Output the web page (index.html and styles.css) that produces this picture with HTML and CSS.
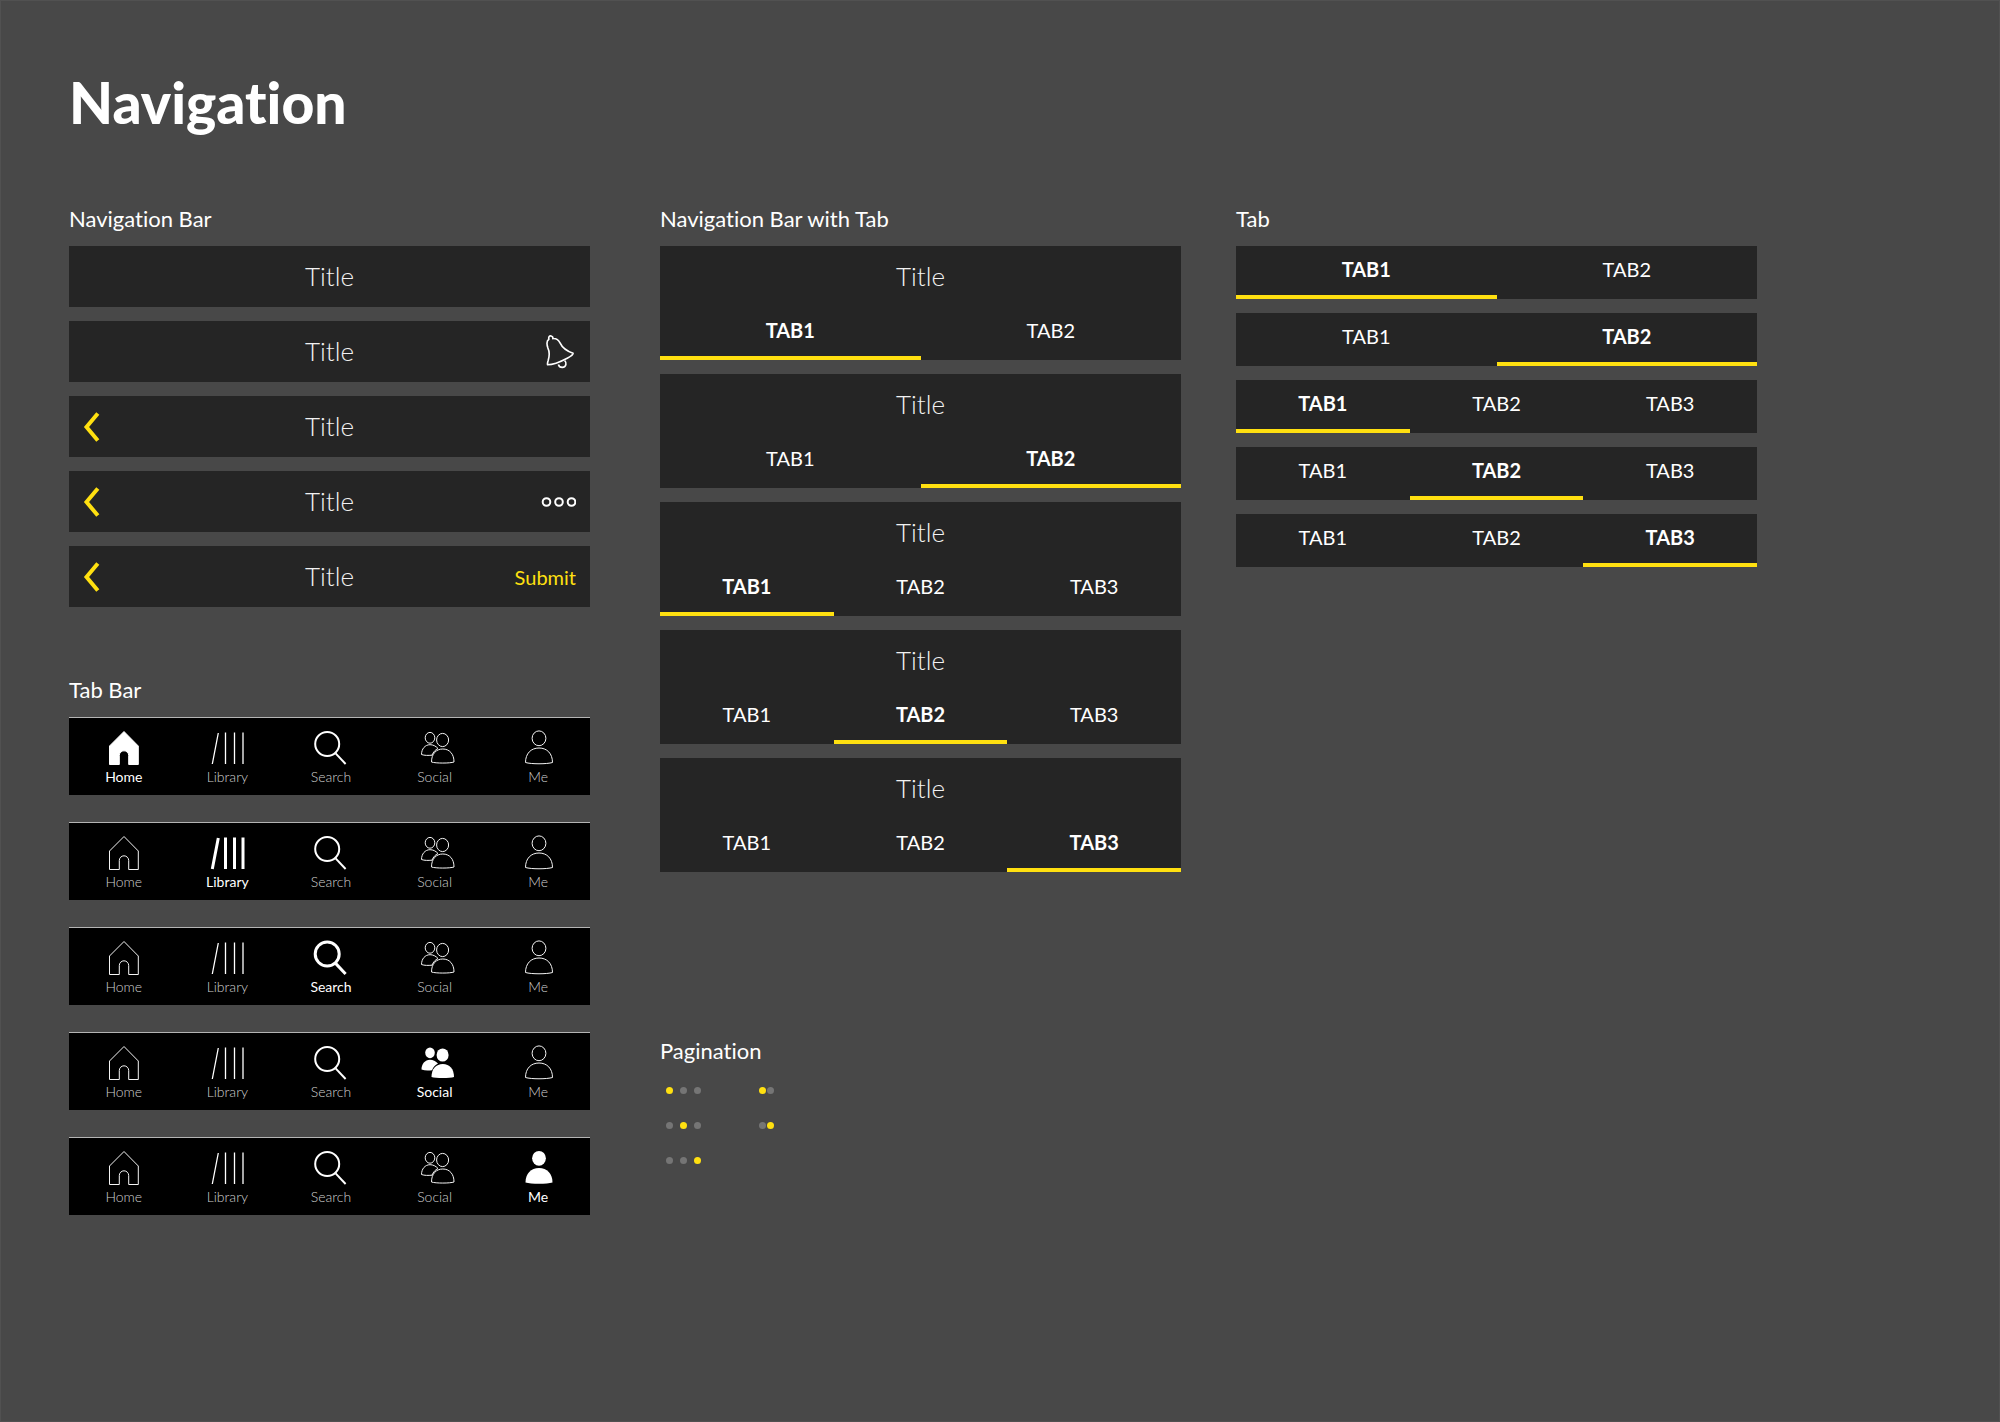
FILE: index.html
```html
<!DOCTYPE html>
<html lang="en">
<head>
<meta charset="utf-8">
<title>Navigation</title>
<link rel="stylesheet" href="styles.css">
</head>
<body>
<svg class="sprite" aria-hidden="true">
  <symbol id="home" viewBox="0 0 40 40"><path d="M20 4.5 34.3 19V37.5H24.7V28.5a4.7 4.7 0 0 0-9.4 0V37.5H5.5V19Z"/></symbol>
  <symbol id="library" viewBox="0 0 40 40"><path d="M11.3 6 5.3 37M18.5 5.5V37M27.5 5.5V37M36 5.5V37"/></symbol>
  <symbol id="search" viewBox="0 0 40 40"><circle cx="16.2" cy="17" r="12"/><path d="M24.6 26.4 34.6 37"/></symbol>
  <symbol id="social" viewBox="0 0 40 40"><ellipse cx="15" cy="10.8" rx="4.8" ry="5.4"/><ellipse cx="27.6" cy="13" rx="6" ry="6.6"/><path d="M23 21.5C20.8 19 18 17.7 15 17.7 10 17.7 6.5 22 6.5 27.5 9.5 28.6 13 28.5 17 28.2 18.2 25.2 20.2 22.8 23 21.5Z"/><path d="M16.5 35C16.5 27 21 22 27.8 22S39 27 39 35C35 36.4 20.5 36.4 16.5 35Z"/></symbol>
  <symbol id="me" viewBox="0 0 40 40"><ellipse cx="21" cy="11.3" rx="6.9" ry="7.4"/><path d="M7.5 35.5C7.5 26.5 13 21 21 21S34.5 26.5 34.5 35.5C29 37.2 13 37.2 7.5 35.5Z"/></symbol>
  <symbol id="back" viewBox="0 0 16 30"><path d="M13.8 1.5 2.5 15 13.8 28.5"/></symbol>
  <symbol id="bell" viewBox="78 40 90 110"><path d="M86 56C84 48 88 45 93 46 97 47 99 50 98 54 108 53 115 57 120 67 126 80 138 91 160 99 160 104 150 110 142 114 125 123 105 134 82 134 81 130 82 126 84 120 88 106 88 93 83 83 79 71 78 61 86 56Z"/><path d="M115 133C118 145 136 145 138 133 139 129 138 125 134 121"/></symbol>
  <symbol id="more" viewBox="0 0 36 12"><circle cx="6.5" cy="6" r="3.8"/><circle cx="19" cy="6" r="3.8"/><circle cx="31.5" cy="6" r="3.8"/></symbol>
</svg>
<main class="page">
  <h1>Navigation</h1>
  <div class="columns">
    <div class="column">
      <section>
        <h2>Navigation Bar</h2>
        <div class="stack">
          <header class="navbar"><span class="title">Title</span></header>
          <header class="navbar"><span class="title">Title</span><button class="action" aria-label="Notifications"><svg class="bell"><use href="#bell"/></svg></button></header>
          <header class="navbar"><button class="back" aria-label="Back"><svg><use href="#back"/></svg></button><span class="title">Title</span></header>
          <header class="navbar"><button class="back" aria-label="Back"><svg><use href="#back"/></svg></button><span class="title">Title</span><button class="action" aria-label="More"><svg class="more"><use href="#more"/></svg></button></header>
          <header class="navbar"><button class="back" aria-label="Back"><svg><use href="#back"/></svg></button><span class="title">Title</span><button class="action">Submit</button></header>
        </div>
      </section>
      <section class="tabbar-section">
        <h2>Tab Bar</h2>
        <div class="stack stack-wide">
          <nav class="tabbar">
            <a href="#" class="item solid active"><svg><use href="#home"/></svg>Home</a>
            <a href="#" class="item books"><svg><use href="#library"/></svg>Library</a>
            <a href="#" class="item lens"><svg><use href="#search"/></svg>Search</a>
            <a href="#" class="item"><svg><use href="#social"/></svg>Social</a>
            <a href="#" class="item"><svg><use href="#me"/></svg>Me</a>
          </nav>
          <nav class="tabbar">
            <a href="#" class="item"><svg><use href="#home"/></svg>Home</a>
            <a href="#" class="item books active"><svg><use href="#library"/></svg>Library</a>
            <a href="#" class="item lens"><svg><use href="#search"/></svg>Search</a>
            <a href="#" class="item"><svg><use href="#social"/></svg>Social</a>
            <a href="#" class="item"><svg><use href="#me"/></svg>Me</a>
          </nav>
          <nav class="tabbar">
            <a href="#" class="item"><svg><use href="#home"/></svg>Home</a>
            <a href="#" class="item books"><svg><use href="#library"/></svg>Library</a>
            <a href="#" class="item lens active"><svg><use href="#search"/></svg>Search</a>
            <a href="#" class="item"><svg><use href="#social"/></svg>Social</a>
            <a href="#" class="item"><svg><use href="#me"/></svg>Me</a>
          </nav>
          <nav class="tabbar">
            <a href="#" class="item"><svg><use href="#home"/></svg>Home</a>
            <a href="#" class="item books"><svg><use href="#library"/></svg>Library</a>
            <a href="#" class="item lens"><svg><use href="#search"/></svg>Search</a>
            <a href="#" class="item people active"><svg><use href="#social"/></svg>Social</a>
            <a href="#" class="item"><svg><use href="#me"/></svg>Me</a>
          </nav>
          <nav class="tabbar">
            <a href="#" class="item"><svg><use href="#home"/></svg>Home</a>
            <a href="#" class="item books"><svg><use href="#library"/></svg>Library</a>
            <a href="#" class="item lens"><svg><use href="#search"/></svg>Search</a>
            <a href="#" class="item"><svg><use href="#social"/></svg>Social</a>
            <a href="#" class="item people active"><svg><use href="#me"/></svg>Me</a>
          </nav>
        </div>
      </section>
    </div>
    <div class="column column-nav-tab">
      <section>
        <h2>Navigation Bar with Tab</h2>
        <div class="stack">
          <div class="card"><header class="navbar"><span class="title">Title</span></header><div class="tabs"><button class="tab selected">TAB1</button><button class="tab">TAB2</button></div></div>
          <div class="card"><header class="navbar"><span class="title">Title</span></header><div class="tabs"><button class="tab">TAB1</button><button class="tab selected">TAB2</button></div></div>
          <div class="card"><header class="navbar"><span class="title">Title</span></header><div class="tabs"><button class="tab selected">TAB1</button><button class="tab">TAB2</button><button class="tab">TAB3</button></div></div>
          <div class="card"><header class="navbar"><span class="title">Title</span></header><div class="tabs"><button class="tab">TAB1</button><button class="tab selected">TAB2</button><button class="tab">TAB3</button></div></div>
          <div class="card"><header class="navbar"><span class="title">Title</span></header><div class="tabs"><button class="tab">TAB1</button><button class="tab">TAB2</button><button class="tab selected">TAB3</button></div></div>
        </div>
      </section>
      <section class="pagination-section">
        <h2>Pagination</h2>
        <div class="pagination">
          <div class="dots"><button class="dot current" aria-label="Page 1"></button><button class="dot" aria-label="Page 2"></button><button class="dot" aria-label="Page 3"></button></div>
          <div class="dots tight"><button class="dot current" aria-label="Page 1"></button><button class="dot" aria-label="Page 2"></button></div>
          <div class="dots"><button class="dot" aria-label="Page 1"></button><button class="dot current" aria-label="Page 2"></button><button class="dot" aria-label="Page 3"></button></div>
          <div class="dots tight"><button class="dot" aria-label="Page 1"></button><button class="dot current" aria-label="Page 2"></button></div>
          <div class="dots"><button class="dot" aria-label="Page 1"></button><button class="dot" aria-label="Page 2"></button><button class="dot current" aria-label="Page 3"></button></div>
        </div>
      </section>
    </div>
    <div class="column column-tab">
      <section>
        <h2>Tab</h2>
        <div class="stack">
          <div class="tabs"><button class="tab selected">TAB1</button><button class="tab">TAB2</button></div>
          <div class="tabs"><button class="tab">TAB1</button><button class="tab selected">TAB2</button></div>
          <div class="tabs"><button class="tab selected">TAB1</button><button class="tab">TAB2</button><button class="tab">TAB3</button></div>
          <div class="tabs"><button class="tab">TAB1</button><button class="tab selected">TAB2</button><button class="tab">TAB3</button></div>
          <div class="tabs"><button class="tab">TAB1</button><button class="tab">TAB2</button><button class="tab selected">TAB3</button></div>
        </div>
      </section>
    </div>
  </div>
</main>
</body>
</html>
```
FILE: styles.css
```css
* { box-sizing: border-box; }

body {
  margin: 0;
  background: #484848;
  color: #fff;
  font-family: Lato, "Liberation Sans", sans-serif;
  font-variant-ligatures: none;
}

button {
  margin: 0;
  padding: 0;
  border: 0;
  background: none;
  color: inherit;
  font: inherit;
}

svg { display: block; fill: none; stroke: currentColor; }

.sprite { display: none; }

.page {
  min-height: 100vh;
  padding: 67px 242px 67px 68px;
  border: 1px solid #515151;
}

h1 {
  margin: 0 0 70px;
  font-size: 57px;
  font-weight: 900;
  line-height: 68px;
}

h2 {
  margin: 0 0 14px;
  font-size: 22px;
  font-weight: 400;
  line-height: 26px;
}

.columns { display: flex; align-items: flex-start; }
.column { flex: 1 1 0; min-width: 0; }
.column-nav-tab { margin-left: 70px; }
.column-tab { margin-left: 55px; }

.stack { display: flex; flex-direction: column; gap: 14px; }
.stack-wide { gap: 27px; }

/* Navigation bar */
.navbar {
  display: grid;
  grid-template-columns: 1fr auto 1fr;
  align-items: center;
  height: 61px;
  padding: 0 14px;
  background: #252525;
}

.title {
  grid-column: 2;
  grid-row: 1;
  padding-bottom: 2px;
  color: #f2f2f2;
  font-size: 26px;
  font-weight: 300;
  line-height: 30px;
}

.back {
  grid-column: 1;
  grid-row: 1;
  justify-self: start;
  color: #ffe010;
}

.back svg { width: 18px; height: 30px; stroke-width: 4; }

.action {
  grid-column: 3;
  grid-row: 1;
  justify-self: end;
  color: #ffe010;
  font-size: 20px;
  line-height: 24px;
}

.bell { width: 30px; height: 36px; color: #fff; stroke-width: 5; stroke-linejoin: round; }
.more { width: 36px; height: 12px; color: #fff; stroke-width: 2; }

/* Tabs */
.tabs { display: flex; background: #252525; }

.tab {
  flex: 1 1 0;
  height: 53px;
  padding-bottom: 3px;
  border-bottom: 4px solid transparent;
  font-size: 20px;
  line-height: 24px;
}

.tab.selected { border-color: #ffe010; font-weight: 700; }

/* Tab bar */
.tabbar-section { margin-top: 70px; }

.tabbar {
  display: flex;
  height: 78px;
  padding: 9px 0 0 3px;
  border-top: 1px solid #b4b4b4;
  background: #000;
}

.item {
  flex: 1 1 0;
  display: flex;
  flex-direction: column;
  align-items: center;
  gap: 1px;
  color: #cfcfcf;
  font-size: 14px;
  font-weight: 300;
  line-height: 18px;
  text-decoration: none;
}

.item svg { width: 40px; height: 40px; color: #f4f4f4; stroke-width: 1; }
.item.books svg { color: #fff; stroke-width: 1.3; }
.item.lens svg { color: #fff; stroke-width: 2; }

.item.active { color: #fff; font-weight: 400; }
.item.active svg { color: #fff; }
.item.books.active svg,
.item.lens.active svg { stroke-width: 3; }
.item.solid.active svg { fill: currentColor; }
.item.people.active svg { fill: currentColor; stroke: none; }

/* Pagination */
.pagination-section { margin-top: 166px; }

.pagination {
  display: grid;
  grid-template-columns: auto auto;
  justify-content: start;
  gap: 28px 58px;
  padding: 9px 6px;
}

.dots { display: flex; gap: 7px; }
.tight { gap: 1px; }

.dot { width: 7px; height: 7px; border-radius: 50%; background: #757575; }
.dot.current { background: #ffe010; }
```
